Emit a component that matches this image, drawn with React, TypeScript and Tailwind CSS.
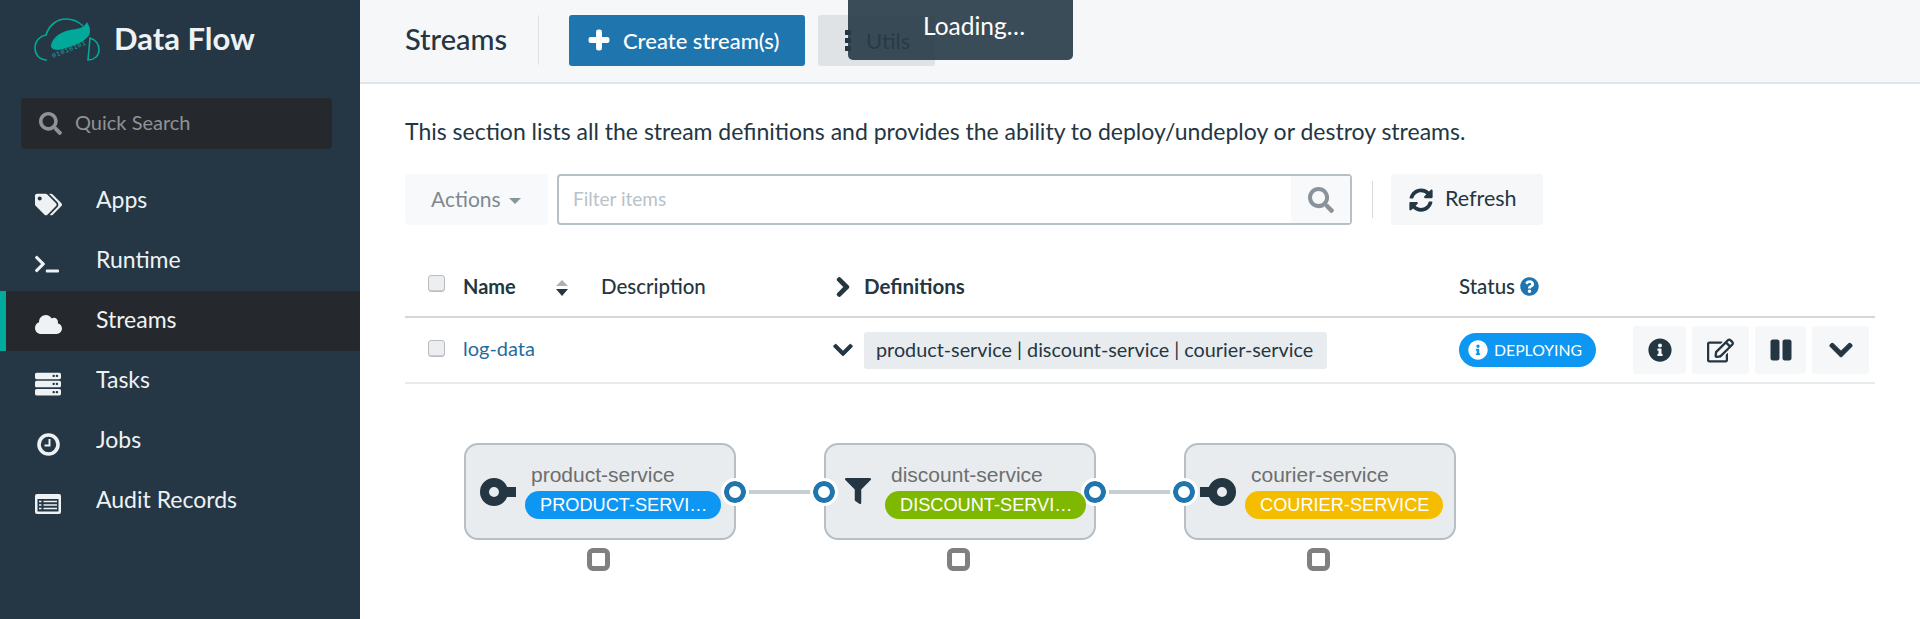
import { FaTags, FaTerminal, FaCloud, FaServer, FaSearch, FaPlus, FaSyncAlt, FaChevronRight, FaChevronDown, FaQuestionCircle, FaInfoCircle, FaRegEdit, FaPause, FaFilter } from 'react-icons/fa'
import type { ReactNode } from 'react'

function Logo() {
  return (
    <svg width="66" height="44" viewBox="0 0 66 44" className="shrink-0 mt-px">
      <path d="M13 42 C5 42 1 36 1 30 C1 23 6 18 12 17 C15 7 23 1 32 1 C39 1 45 4 49 8 M56 20 C62 22 65 27 65 32 C65 38 60 42 54 42 Z" fill="none" stroke="#00a99a" strokeWidth="1.6" />
      <path d="M17 29 C17 21 25 14 36 12 C44 11 50 10 53 4 C58 12 57 18 49 23 C40 28 30 31 24 32 C20 32 18 31 17 29 Z" fill="#00a99a" />
      <text x="19" y="40" fontSize="6.6" fill="#12b5a6" fontFamily="Liberation Mono, monospace" transform="rotate(-22 19 40)" letterSpacing="0.6">01010101</text>
    </svg>
  )
}

function ClockIcon() {
  return (
    <svg width="23" height="23" viewBox="0 0 23 23">
      <circle cx="11.5" cy="11.5" r="9.5" fill="none" stroke="#eef2f4" strokeWidth="3.6" />
      <path d="M12.5 6 V12.5 H7.5" fill="none" stroke="#eef2f4" strokeWidth="2" />
    </svg>
  )
}

function ListIcon() {
  return (
    <svg width="26" height="20" viewBox="0 0 26 20">
      <rect width="26" height="20" rx="2" fill="#eef2f4" />
      <path d="M2.5 5 H23.5 V17.5 H2.5 Z" fill="#253744" />
      <path d="M4 7.5 H6.5 M8.5 7.5 H22 M4 11 H6.5 M8.5 11 H22 M4 14.5 H6.5 M8.5 14.5 H22" stroke="#eef2f4" strokeWidth="1.6" />
    </svg>
  )
}

const navItems: { label: string; icon: ReactNode; active?: boolean }[] = [
  { label: 'Apps', icon: <FaTags size={27} /> },
  { label: 'Runtime', icon: <FaTerminal size={24} /> },
  { label: 'Streams', icon: <FaCloud size={27} />, active: true },
  { label: 'Tasks', icon: <FaServer size={26} /> },
  { label: 'Jobs', icon: <span className="pl-[2px]"><ClockIcon /></span> },
  { label: 'Audit Records', icon: <ListIcon /> },
]

function Sidebar() {
  return (
    <aside className="w-[360px] shrink-0 h-full bg-[#253744] text-[#eef2f4]">
      <div className="h-[98px] flex items-start pt-[17px] pl-[34px] gap-[14px]">
        <Logo />
        <span className="text-[31px] leading-[42px] font-bold">Data Flow</span>
      </div>
      <div className="mx-[21px] w-[311px] h-[51px] rounded bg-[#25292e] flex items-center pl-[18px] gap-[13px] text-[#8f9396]">
        <FaSearch size={23} />
        <span className="text-[20px] -translate-y-[2px]">Quick Search</span>
      </div>
      <nav className="mt-[22px]">
        {navItems.map((item) => (
          <div key={item.label} className={item.active ? 'h-[60px] flex items-center bg-[#25292e] border-l-[6px] border-[#00ab9d] pl-[29px]' : 'h-[60px] flex items-center pl-[35px]'}>
            <span className="w-[61px] flex translate-y-[3px]">{item.icon}</span>
            <span className="text-[23px] leading-none -translate-y-[2px]">{item.label}</span>
          </div>
        ))}
      </nav>
    </aside>
  )
}

function Checkbox() {
  return <span className="block w-[17px] h-[17px] rounded-[3px] border border-[#b9bdc1] bg-[#eceef0] shadow-[inset_0_-1px_0_#c9cdd0]" />
}

function ActionButton({ width, children }: { width: string; children: ReactNode }) {
  return <button className={`${width} h-[48px] rounded-[3px] bg-[#f5f7f9] flex items-center justify-center text-[#243642]`}>{children}</button>
}

function Toolbar() {
  return (
    <div className="mt-[29px] h-[51px] flex items-center">
      <div className="w-[143px] h-full bg-[#f8f9fa] rounded-[3px] flex items-center pl-[26px] gap-[8px] text-[21px] text-[#7e8a91]">
        <span className="-translate-y-px">Actions</span>
        <span className="border-x-[6px] border-x-transparent border-t-[6px] border-t-[#8a959b] mt-[2px]" />
      </div>
      <div className="ml-[9px] w-[795px] h-full border-2 border-[#b7c0c4] rounded flex items-stretch">
        <span className="flex-1 pl-[14px] flex items-center text-[19px] text-[#b8c2c8]">Filter items</span>
        <span className="w-[59px] bg-[#f8f9fa] flex items-center justify-center text-[#8a9399]">
          <FaSearch size={26} />
        </span>
      </div>
      <span className="ml-[20px] w-px h-[37px] bg-[#d5dadd]" />
      <button className="ml-[18px] w-[152px] h-full bg-[#f5f7f9] rounded-[3px] flex items-center pl-[18px] gap-[12px] text-[21.5px] text-[#243642]">
        <FaSyncAlt size={24} />
        <span className="-translate-y-px">Refresh</span>
      </button>
    </div>
  )
}

function StreamTable() {
  return (
    <div className="mt-[31px] text-[#243642]">
      <div className="h-[62px] grid grid-cols-[58px_138px_232px_626px_174px_1fr] items-center border-b-2 border-[#d4d8da]">
        <span className="pl-[23px] -translate-y-[3px]"><Checkbox /></span>
        <span className="flex items-center text-[20px] font-bold">
          Name
          <svg width="14" height="16" viewBox="0 0 14 16" className="ml-[39px] mt-[4px]">
            <path d="M7 0 L13 6 H1 Z" fill="#a9b2b7" />
            <path d="M7 16 L13 9 H1 Z" fill="#243642" />
          </svg>
        </span>
        <span className="text-[20.5px] font-medium">Description</span>
        <span className="flex items-center text-[20.5px] font-bold">
          <FaChevronRight size={22} className="mr-[10px] mt-[2px] -ml-[1px]" stroke="currentColor" strokeWidth={30} />
          Definitions
        </span>
        <span className="flex items-center text-[20.5px] font-medium gap-[5px]">
          Status
          <FaQuestionCircle size={19} className="text-[#1e75b1]" />
        </span>
        <span />
      </div>
      <div className="h-[66px] grid grid-cols-[58px_138px_232px_626px_174px_1fr] items-center border-b-2 border-[#e8ebec]">
        <span className="pl-[23px] -translate-y-[2px]"><Checkbox /></span>
        <span className="text-[20px] text-[#1f6c9e] -translate-y-[2px]">log-data</span>
        <span />
        <span className="flex items-center">
          <FaChevronDown size={22} className="mr-[10px] -ml-px" stroke="currentColor" strokeWidth={20} />
          <span className="h-[37px] w-[463px] rounded-[3px] bg-[#e9ecef] flex items-center pl-[12px] text-[19.8px]">product-service | discount-service | courier-service</span>
        </span>
        <span className="h-[34px] w-[137px] rounded-full bg-[#0d96f2] flex items-center pl-[9px] gap-[6px] text-white text-[15.8px]">
          <FaInfoCircle size={20} />
          DEPLOYING
        </span>
        <span className="flex gap-[6px]">
          <ActionButton width="w-[53px]"><FaInfoCircle size={24} /></ActionButton>
          <ActionButton width="w-[57px]"><FaRegEdit size={27} /></ActionButton>
          <ActionButton width="w-[51px]"><FaPause size={24} /></ActionButton>
          <ActionButton width="w-[57px]"><FaChevronDown size={26} stroke="currentColor" strokeWidth={20} /></ActionButton>
        </span>
      </div>
    </div>
  )
}

function Port({ side }: { side: 'left' | 'right' }) {
  return (
    <span className={`absolute top-[36px] ${side === 'left' ? '-left-[13px]' : '-right-[12px]'} w-[22px] h-[22px] rounded-full bg-white border-[5px] border-[#1f75ae] outline-[3px] outline-white`} />
  )
}

function SourceIcon({ flip }: { flip?: boolean }) {
  return (
    <svg width="36" height="28" viewBox="0 0 36 28" className={flip ? '-scale-x-100' : ''}>
      <path d="M14 0 A14 14 0 1 1 14 28 A14 14 0 0 1 14 0 Z M14 9 A5 5 0 1 0 14 19 A5 5 0 0 0 14 9 Z" fillRule="evenodd" fill="#243642" />
      <rect x="24" y="9" width="12" height="10" fill="#243642" />
    </svg>
  )
}

function GraphNode({ name, pill, color, icon, left, right, pillWidth }: { name: string; pill: string; color: string; icon: ReactNode; left?: boolean; right?: boolean; pillWidth: string }) {
  return (
    <div className="w-[272px] shrink-0 flex flex-col items-center">
      <div className="relative w-full h-[97px] rounded-[14px] border-2 border-[#b5bfc4] bg-[#e9ecef] font-['Liberation_Sans',sans-serif]">
        {left && <Port side="left" />}
        {right && <Port side="right" />}
        <span className="absolute left-[12px] top-[33px] flex w-[40px] justify-center">{icon}</span>
        <div className="absolute left-[59px] top-[19px] right-0">
          <div className="pl-[6px] text-[21px] leading-[22px] text-[#6e6e6e]">{name}</div>
          <div className={`${pillWidth} ${color} mt-[5px] h-[28px] rounded-full text-white text-[18.2px] leading-[28px] pl-[15px] whitespace-nowrap`}>{pill}</div>
        </div>
      </div>
      <span className="mt-[8px] -ml-[3px] w-[23px] h-[23px] rounded-[6px] border-[5px] border-[#808080]" />
    </div>
  )
}

function Link() {
  return (
    <div className="w-[88px] shrink-0 h-[97px] flex items-center px-[9px]">
      <span className="w-full h-[4px] bg-[#c5ced3]" />
    </div>
  )
}

function StreamGraph() {
  return (
    <div className="mt-[59px] ml-[59px] flex items-start">
      <GraphNode name="product-service" pill="PRODUCT-SERVI…" color="bg-[#0d96f2]" pillWidth="w-[196px]" icon={<SourceIcon />} right />
      <Link />
      <GraphNode name="discount-service" pill="DISCOUNT-SERVI…" color="bg-[#7fb800]" pillWidth="w-[201px]" icon={<FaFilter size={26} className="text-[#243642]" />} left right />
      <Link />
      <GraphNode name="courier-service" pill="COURIER-SERVICE" color="bg-[#f5bd00]" pillWidth="w-[198px]" icon={<SourceIcon flip />} left />
    </div>
  )
}

export default function App() {
  return (
    <div className="w-full h-[619px] flex overflow-hidden bg-white font-['Lato',sans-serif]">
      <Sidebar />
      <main className="relative flex-1 min-w-0">
        <header className="h-[84px] bg-[#f5f7f9] border-b-2 border-[#dfe5e9] flex items-center pl-[45px] pb-[2px]">
          <h1 className="w-[133px] text-[29px] font-medium text-[#243642] -translate-y-px">Streams</h1>
          <span className="w-px h-[50px] bg-[#dfe3e6]" />
          <button className="ml-[30px] w-[236px] h-[51px] rounded-[3px] bg-[#1f75ae] flex items-center pl-[19px] gap-[13px] text-white text-[22px] font-medium">
            <FaPlus size={22} stroke="currentColor" strokeWidth={40} />
            Create stream(s)
          </button>
          <button className="ml-[13px] w-[117px] h-[51px] rounded-[3px] bg-[#dfe3e6] flex items-center pl-[27px] gap-[15px] text-[#3f4d57] text-[22px]">
            <span className="flex flex-col gap-[3px]">
              <span className="w-[6px] h-[5px] bg-[#243642]" />
              <span className="w-[6px] h-[5px] bg-[#243642]" />
              <span className="w-[6px] h-[5px] bg-[#243642]" />
            </span>
            Utils
          </button>
        </header>
        <div className="absolute top-0 left-[488px] w-[225px] h-[60px] rounded-b-[5px] bg-[#263845]/90 text-white text-[24.5px] flex items-center pl-[75px] pb-[8px]">Loading…</div>
        <div className="px-[45px]">
          <p className="pt-[33px] text-[23px] leading-[28px] text-[#243642]">This section lists all the stream definitions and provides the ability to deploy/undeploy or destroy streams.</p>
          <Toolbar />
          <StreamTable />
          <StreamGraph />
        </div>
      </main>
    </div>
  )
}
